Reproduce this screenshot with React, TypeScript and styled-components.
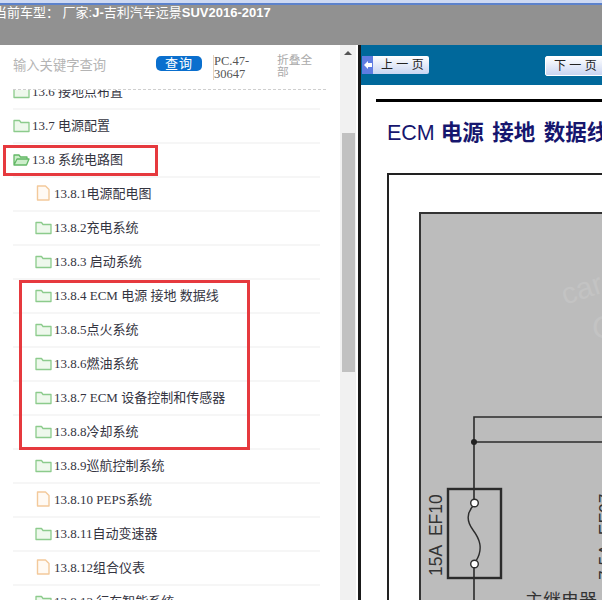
import styled, { createGlobalStyle } from "styled-components";

const GlobalStyle = createGlobalStyle`
  html, body {
    margin: 0;
    padding: 0;
    overflow: hidden;
    background: #fff;
  }
`;

const SANS = `"Liberation Sans", "Noto Sans CJK SC", sans-serif`;
const SERIF = `"Liberation Serif", "Noto Sans CJK SC", serif`;

const Screen = styled.div`
  width: 602px;
  height: 600px;
  overflow: hidden;
  display: flex;
  flex-direction: column;
  position: relative;
`;
const TopEdge = styled.div`
  height: 3px;
  flex: none;
  background: #cdd9f3;
  border-bottom: 2px solid #5c82cc;
`;
const Header = styled.div`
  height: 40px;
  flex: none;
  background: #919191;
  color: #fff;
  font: 13px/15px ${SANS};
  white-space: pre;
  span {
    display: block;
    margin-left: -6px;
    b {
      font-weight: bold;
    }
  }
`;
const Body = styled.div`
  flex: 1;
  min-height: 0;
  display: flex;
`;
const Side = styled.div`
  width: 340px;
  flex: none;
  display: flex;
  flex-direction: column;
  overflow: hidden;
`;
const SearchBar = styled.div`
  height: 44px;
  flex: none;
  width: 313px;
  margin-left: 13px;
  display: flex;
  align-items: flex-start;
  border-bottom: 1px dashed #cfcfcf;
`;
const Placeholder = styled.div`
  width: 143px;
  margin-top: 12px;
  font: 13.3px/17px ${SANS};
  color: #b4b4b4;
`;
const SearchButton = styled.button`
  width: 46px;
  height: 15px;
  margin-top: 11px;
  border: none;
  border-radius: 5px;
  padding: 0;
  background: #0a6fce;
  color: #fff;
  font: 13px/15px ${SANS};
  letter-spacing: 1px;
`;
const Code = styled.div`
  width: 34px;
  margin: 10px 0 0 11px;
  border-left: 1px solid #e7d3bd;
  font: 12.5px/12.5px ${SERIF};
  color: #555;
`;
const Collapse = styled.div`
  width: 36px;
  margin: 9px 0 0 29px;
  font: 11.7px/12px ${SANS};
  color: #aaa;
`;
const Tree = styled.div`
  flex: 1;
  min-height: 0;
  overflow: hidden;
  padding-left: 13px;
  width: 307px;
`;
const Row = styled.div<{ $level: number; $clipped?: boolean }>`
  height: 30px;
  padding-bottom: 2px;
  margin-top: ${(p) => (p.$clipped ? "-14px" : "0")};
  border-bottom: 2px solid #f6f6f6;
  padding-left: ${(p) => (p.$level === 2 ? 22 : 0)}px;
  display: flex;
  align-items: center;
  gap: 2px;
  font: 13px/17px ${SERIF};
  color: #34343f;
  white-space: pre;
  svg {
    flex: none;
  }
`;
const Scrollbar = styled.div`
  width: 16px;
  flex: none;
  background: #f1f1f1;
  display: flex;
  flex-direction: column;
  align-items: center;
`;
const ArrowUp = styled.div`
  margin-top: 6px;
  border-left: 4px solid transparent;
  border-right: 4px solid transparent;
  border-bottom: 4px solid #555;
`;
const Thumb = styled.div`
  width: 13px;
  height: 239px;
  margin-top: 78px;
  background: #c1c1c1;
`;
const Viewer = styled.div`
  flex: 1;
  min-width: 0;
  margin-left: 2px;
  border-left: 3px solid #1a1a1a;
  overflow: hidden;
`;
const Toolbar = styled.div`
  height: 40px;
  background: #00689b;
  display: flex;
  justify-content: space-between;
  align-items: flex-start;
  padding: 11px 0 0 1px;
  box-sizing: border-box;
  width: 246px;
`;
const PageButton = styled.div<{ $next?: boolean }>`
  width: ${(p) => (p.$next ? 62 : 67)}px;
  height: ${(p) => (p.$next ? 20 : 18)}px;
  flex: none;
  box-sizing: border-box;
  display: flex;
  align-items: center;
  border: ${(p) => (p.$next ? "1px solid #fff" : "none")};
  border-radius: 2px;
  background: linear-gradient(#fff, #c9d5f2);
  font: 12px/16px ${SANS};
  color: #222;
  white-space: pre;
`;
const PageArrow = styled.div`
  width: 11px;
  height: 100%;
  flex: none;
  margin-right: 8px;
  background: #5f7ce2;
  display: flex;
  align-items: center;
  justify-content: center;
  svg {
    display: block;
  }
`;
const PageLabel = styled.span`
  margin-left: 8px;
`;
const Sheet = styled.div`
  padding: 14px 0 0 15px;
  width: 400px;
`;
const Rule = styled.div`
  height: 3px;
  background: #000;
`;
const DocTitle = styled.h1`
  margin: 19px 0 0 11px;
  font: bold 21.5px/24px ${SANS};
  word-spacing: 2.5px;
  color: #16166e;
  white-space: pre;
  em {
    font-style: normal;
    font-weight: normal;
    margin-right: -2.5px;
  }
`;
const DiagramFrame = styled.div`
  margin: 28px 0 0 11px;
  height: 500px;
  border: 2px solid #222;
  padding: 37px 0 0 30px;
`;
const DiagramPanel = styled.div`
  height: 500px;
  background: #bcbcbc;
  border: 2px solid #333;
  svg {
    display: block;
  }
`;
const Annotation = styled.div<{ $x: number; $y: number; $w: number; $h: number }>`
  position: absolute;
  left: ${(p) => p.$x}px;
  top: ${(p) => p.$y}px;
  width: ${(p) => p.$w}px;
  height: ${(p) => p.$h}px;
  box-sizing: border-box;
  border: 3px solid #e6393e;
  pointer-events: none;
`;

function FolderIcon({ open }: { open?: boolean }) {
  return (
    <svg width="17" height="15" viewBox="0 0 17 15">
      {open ? (
        <path
          d="M1 13V3h5l1.500 2H14v2.500M1 13l3-6h12l-2.500 6z"
          fill="#cdeecb"
          stroke="#63b866"
          strokeWidth="1.300"
          strokeLinejoin="round"
        />
      ) : (
        <path
          d="M1 13.500V2.500h5.500L8 4.500h8v9z"
          fill="#eef8ec"
          stroke="#8ccb8c"
          strokeWidth="1.300"
          strokeLinejoin="round"
        />
      )}
    </svg>
  );
}

function DocIcon() {
  return (
    <svg width="17" height="16" viewBox="0 0 17 16">
      <path
        d="M2.500 1h8l3.500 3.500V15h-11.500z"
        fill="#fffaf4"
        stroke="#f3c99a"
        strokeWidth="1.400"
        strokeLinejoin="round"
      />
    </svg>
  );
}

const rows: { label: string; level: number; icon: "folder" | "open" | "doc" }[] = [
  { label: "13.6 接地点布置", level: 1, icon: "folder" },
  { label: "13.7 电源配置", level: 1, icon: "folder" },
  { label: "13.8 系统电路图", level: 1, icon: "open" },
  { label: "13.8.1电源配电图", level: 2, icon: "doc" },
  { label: "13.8.2充电系统", level: 2, icon: "folder" },
  { label: "13.8.3 启动系统", level: 2, icon: "folder" },
  { label: "13.8.4 ECM 电源 接地 数据线", level: 2, icon: "folder" },
  { label: "13.8.5点火系统", level: 2, icon: "folder" },
  { label: "13.8.6燃油系统", level: 2, icon: "folder" },
  { label: "13.8.7 ECM 设备控制和传感器", level: 2, icon: "folder" },
  { label: "13.8.8冷却系统", level: 2, icon: "folder" },
  { label: "13.8.9巡航控制系统", level: 2, icon: "folder" },
  { label: "13.8.10 PEPS系统", level: 2, icon: "doc" },
  { label: "13.8.11自动变速器", level: 2, icon: "folder" },
  { label: "13.8.12组合仪表", level: 2, icon: "doc" },
  { label: "13.8.13 行车智能系统", level: 2, icon: "folder" },
];

function Diagram() {
  return (
    <svg width="400" height="496" viewBox="421 214 400 496">
      <g fill="#c3c3c3" fontFamily="Liberation Sans, sans-serif">
        <text x="565" y="305" fontSize="30" transform="rotate(-18 565 305)">
          car
        </text>
        <text x="592" y="338" fontSize="32">
          C
        </text>
      </g>
      <g fill="none" stroke="#2b2b2b">
        <path d="M474 499V417H760M474 442H760M474 568V610" strokeWidth="1.600" />
        <rect x="448" y="489" width="53" height="89" strokeWidth="2.400" />
        <path d="M473 506C466 514 467 522 473 530S484 548 476 561" strokeWidth="1.400" />
        <circle cx="474.500" cy="503" r="3.800" fill="#fff" strokeWidth="1.400" />
        <circle cx="474.500" cy="564" r="3.800" fill="#fff" strokeWidth="1.400" />
      </g>
      <circle cx="474" cy="442" r="3" fill="#222" />
      <text
        x="441.500"
        y="576"
        fontSize="17.500"
        fill="#333"
        fontFamily="Liberation Sans, sans-serif"
        transform="rotate(-90 441.500 576)"
        xmlSpace="preserve"
      >
        15A  EF10
      </text>
      <text
        x="612"
        y="580"
        fontSize="17.500"
        fill="#333"
        fontFamily="Liberation Sans, sans-serif"
        transform="rotate(-90 612 580)"
        xmlSpace="preserve"
      >
        7.5A  EF07
      </text>
      <text
        x="525"
        y="607"
        fontSize="18"
        fill="#333"
        fontFamily="Noto Sans CJK SC, sans-serif"
      >
        主继电器
      </text>
    </svg>
  );
}

export default function App() {
  return (
    <Screen>
      <GlobalStyle />
      <TopEdge />
      <Header>
        <span>
          当前车型： 厂家:<b>J-</b>吉利汽车远景<b>SUV2016-2017</b>
        </span>
      </Header>
      <Body>
        <Side>
          <SearchBar>
            <Placeholder>输入关键字查询</Placeholder>
            <SearchButton>查询</SearchButton>
            <Code>PC.47-30647</Code>
            <Collapse>折叠全部</Collapse>
          </SearchBar>
          <Tree>
            {rows.map((row, i) => (
              <Row key={row.label} $level={row.level} $clipped={i === 0}>
                {row.icon === "doc" ? <DocIcon /> : <FolderIcon open={row.icon === "open"} />}
                {row.label}
              </Row>
            ))}
          </Tree>
        </Side>
        <Scrollbar>
          <ArrowUp />
          <Thumb />
        </Scrollbar>
        <Viewer>
          <Toolbar>
            <PageButton>
              <PageArrow>
                <svg width="8" height="8" viewBox="0 0 8 8">
                  <path d="M0 4l4-4v2h4v4H4v2z" fill="#fff" />
                </svg>
              </PageArrow>
              上 一 页
            </PageButton>
            <PageButton $next>
              <PageLabel>下 一 页</PageLabel>
            </PageButton>
          </Toolbar>
          <Sheet>
            <Rule />
            <DocTitle>
              <em>ECM</em> 电源 接地 数据线
            </DocTitle>
            <DiagramFrame>
              <DiagramPanel>
                <Diagram />
              </DiagramPanel>
            </DiagramFrame>
          </Sheet>
        </Viewer>
      </Body>
      <Annotation $x={3} $y={145} $w={155} $h={31} />
      <Annotation $x={19} $y={280} $w={231} $h={170} />
    </Screen>
  );
}
